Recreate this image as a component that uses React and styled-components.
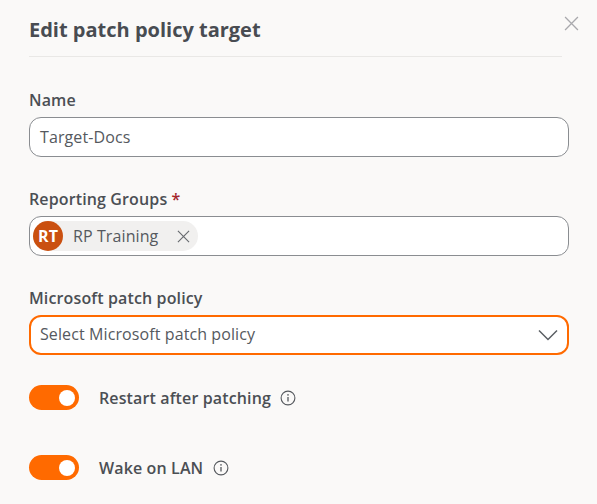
import React from 'react';
import styled, { createGlobalStyle } from 'styled-components';

const GlobalStyle = createGlobalStyle`
    html, body {
        margin: 0;
        padding: 0;
        background: #faf9f8;
    }
    body {
        font-family: "Open Sans", "Liberation Sans", sans-serif;
        color: #4b4f54;
    }
`

const Panel = styled.div`
    position: relative;
    width: 597px;
    height: 504px;
    overflow: hidden;
    box-sizing: border-box;
    padding: 0 28px 0 29px;
    background: #faf9f8;
`

const Header = styled.div`
    width: 533px;
    height: 57px;
    box-sizing: border-box;
    border-bottom: 1px solid #e9e8e6;
    padding-top: 16px;
`

const Title = styled.div`
    font-size: 20px;
    line-height: 28px;
    font-weight: 700;
    color: #484c52;
`

const CloseButton = styled.div`
    position: absolute;
    top: 16px;
    right: 18px;
    width: 15px;
    height: 15px;
    color: #a9a9ad;
    svg {
        display: block;
    }
`

const Form = styled.div`
    display: flex;
    flex-direction: column;
    padding-top: 32px;
`

const Field = styled.div`
    margin-bottom: ${props => props.$tight ? '30px' : '31px'};
`

const Label = styled.div`
    font-size: 16px;
    line-height: 22px;
    font-weight: 600;
    letter-spacing: 0.13px;
    color: #4b4f54;
    margin-bottom: 6px;
`

const Required = styled.span`
    color: #a4262c;
`

const Box = styled.div`
    display: flex;
    align-items: center;
    justify-content: space-between;
    width: 540px;
    height: 40px;
    box-sizing: border-box;
    border: ${props => (props.$focused ? '2px solid #ff6a00' : '1px solid #8a8d91')};
    border-radius: 12px;
    background: #fff;
    padding: ${props => {
        if (props.$tags) return '0 3px';
        return props.$focused ? '0 9px 2px' : '0 10px';
    }};
    font-size: 16px;
    letter-spacing: 0.1px;
    color: #55595e;
`

const Chip = styled.div`
    display: flex;
    align-items: center;
    height: 30px;
    width: 165px;
    border-radius: 15px;
    background: #f1f0ef;
`

const Avatar = styled.div`
    display: flex;
    align-items: center;
    justify-content: center;
    width: 30px;
    height: 30px;
    border-radius: 50%;
    background: #ca5010;
    color: #fff;
    font-size: 16px;
    font-weight: 700;
    letter-spacing: 0;
`

const ChipText = styled.span`
    margin-left: 10px;
    font-size: 16px;
    color: #55595e;
`

const ChipClose = styled.span`
    display: flex;
    margin-left: 19px;
    color: #66696e;
`

const ChevronIcon = styled.svg`
    margin-top: 2px;
`

const ToggleRow = styled.div`
    display: flex;
    align-items: center;
    height: 25px;
    margin-bottom: ${props => props.$last ? 0 : '45px'};
`

const Toggle = styled.div`
    display: flex;
    align-items: center;
    justify-content: flex-end;
    width: 50px;
    height: 25px;
    box-sizing: border-box;
    padding-right: 4px;
    border-radius: 13px;
    background: #ff6a00;
    &::after {
        content: "";
        width: 16px;
        height: 16px;
        border-radius: 50%;
        background: #fff;
    }
`

const ToggleLabel = styled.span`
    margin-left: 20px;
    font-size: 16px;
    font-weight: 600;
    letter-spacing: 0.13px;
    color: #4b4f54;
`

const InfoIcon = styled.svg`
    margin-left: ${props => props.$gap}px;
    margin-top: 1px;
    color: #55595e;
`

const Cross = ({ size }) => (
    <svg width={size} height={size} viewBox="0 0 14 14" fill="none" stroke="currentColor" strokeWidth="1.2">
        <path d="M1 1l12 12M13 1L1 13" />
    </svg>
)

const Info = ({ gap }) => (
    <InfoIcon $gap={gap} width="16" height="16" viewBox="0 0 16 16" fill="none" stroke="currentColor">
        <circle cx="8" cy="8" r="6.9" strokeWidth="1.1" />
        <path d="M8 7v4.5" strokeWidth="1.3" />
        <circle cx="8" cy="4.9" r="0.8" fill="currentColor" stroke="none" />
    </InfoIcon>
)

const App = () => {
    return (
        <Panel>
            <GlobalStyle />
            <Header>
                <Title>Edit patch policy target</Title>
            </Header>
            <CloseButton>
                <Cross size={15} />
            </CloseButton>
            <Form>
                <Field>
                    <Label>Name</Label>
                    <Box>Target-Docs</Box>
                </Field>
                <Field>
                    <Label>Reporting Groups <Required>*</Required></Label>
                    <Box $tags>
                        <Chip>
                            <Avatar>RT</Avatar>
                            <ChipText>RP Training</ChipText>
                            <ChipClose><Cross size={13} /></ChipClose>
                        </Chip>
                    </Box>
                </Field>
                <Field $tight>
                    <Label>Microsoft patch policy</Label>
                    <Box $focused>
                        Select Microsoft patch policy
                        <ChevronIcon width="20" height="12" viewBox="0 0 20 12" fill="none" stroke="#5a5e63" strokeWidth="1.5">
                            <path d="M1 1.5l9 9 9-9" />
                        </ChevronIcon>
                    </Box>
                </Field>
                <ToggleRow>
                    <Toggle />
                    <ToggleLabel>Restart after patching</ToggleLabel>
                    <Info gap={9} />
                </ToggleRow>
                <ToggleRow $last>
                    <Toggle />
                    <ToggleLabel>Wake on LAN</ToggleLabel>
                    <Info gap={10} />
                </ToggleRow>
            </Form>
        </Panel>
    )
}

export default App;
